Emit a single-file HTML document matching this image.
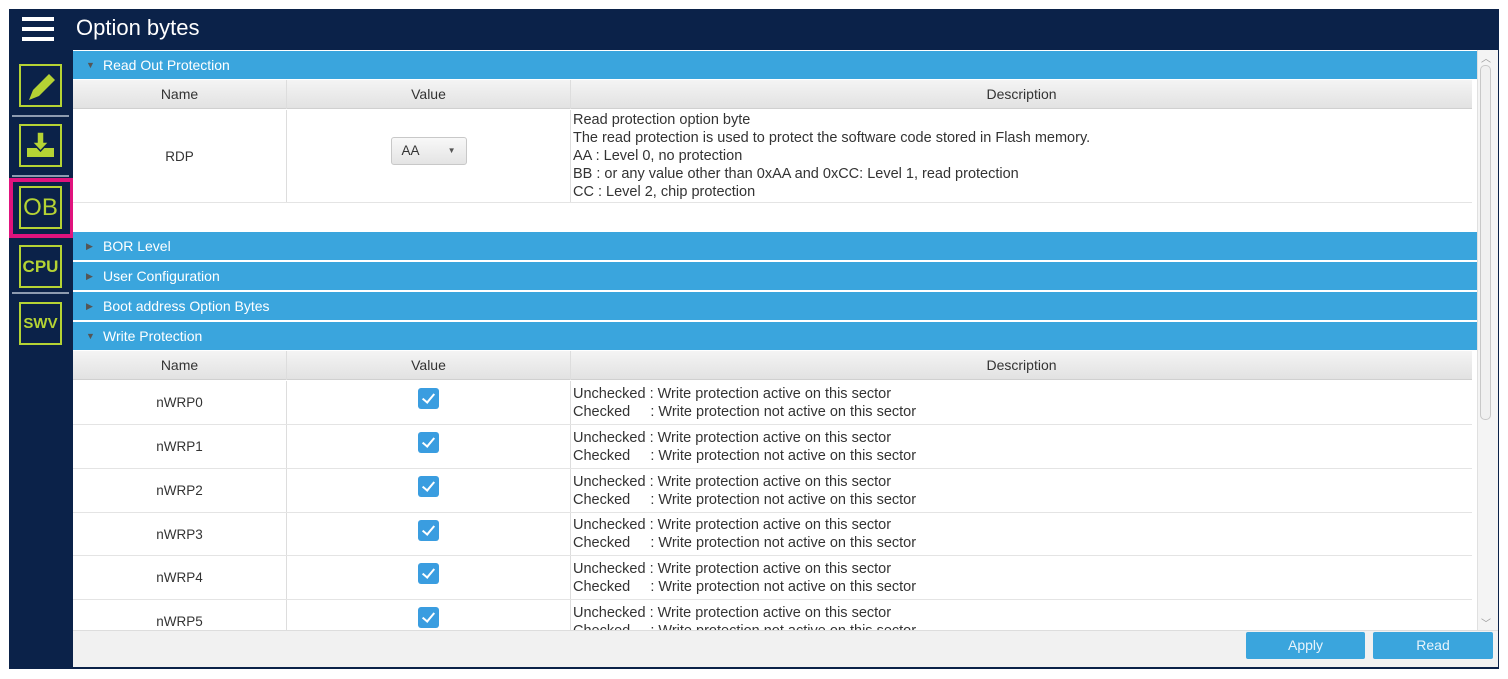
<!DOCTYPE html>
<html><head><meta charset="utf-8"><style>
*{margin:0;padding:0;box-sizing:border-box}
body{width:1508px;height:679px;background:#fff;position:relative;overflow:hidden;font-family:"Liberation Sans",sans-serif;font-size:13.5px;color:#333}
div{position:absolute}
.frame{left:9px;top:9px;width:1490px;height:660px;background:#0b2249}
.title{left:76px;top:15px;color:#fff;font-size:22px}
.content{left:73px;top:50px;width:1425px;height:617px;background:#fff;overflow:hidden}
.sec{left:0;width:1404px;height:28px;background:#3aa5dd;color:#fff;font-size:14px;line-height:28px;padding-left:30px}
.sec i{position:absolute;left:13px;top:0;font-style:normal;font-size:9px;color:#555}
.th{left:0;width:1399px;height:29px;background:linear-gradient(#f4f4f4,#e2e2e2);border-bottom:1px solid #d0d0d0;font-size:14px;line-height:29px;color:#333}
.th span,.row span{position:absolute;text-align:center}
.c1{left:0;width:213px}
.c2{left:213px;width:284px;border-left:1px solid #ddd}
.c3{left:497px;width:902px;border-left:1px solid #ddd}
.row{left:0;width:1399px;border-bottom:1px solid #e4e4e4;background:#fff}
.row .c1,.row .c2{top:0;bottom:0;display:flex;align-items:center;justify-content:center}
.row .c3{top:0;bottom:0;text-align:left;padding-left:2px;line-height:18px;display:flex;flex-direction:column;justify-content:center;font-size:14.5px}
.cb{position:relative;width:21px;height:21px;background:#3a9de0;border-radius:3px;top:-4px}
.cb:after{content:"";position:absolute;left:7px;top:3px;width:5px;height:10px;border:solid #fff;border-width:0 2px 2px 0;transform:rotate(40deg)}
.ico{left:19px;width:43px;height:43px;border:2px solid #b5d334;color:#b5d334;font-weight:bold;text-align:center}
.sep{left:12px;width:57px;height:2px;background:#8d9bb0}
.btn{top:582px;height:27px;background:#3aa5dd;color:#e8f4fb;text-align:center;line-height:27px;font-size:14px;border-radius:2px}
</style></head><body>
<div class="frame"></div>
<div style="left:22px;top:17px;width:32px;height:4px;background:#fff"></div>
<div style="left:22px;top:27px;width:32px;height:4px;background:#fff"></div>
<div style="left:22px;top:37px;width:32px;height:4px;background:#fff"></div>
<div class="title">Option bytes</div>

<div class="ico" style="top:64px"><svg width="39" height="39" viewBox="0 0 39 39" style="position:absolute;left:0;top:0"><path d="M8 34 L12 24 L28 8 L34 14 L18 30 Z" fill="#b5d334"/></svg></div>
<div class="sep" style="top:115px"></div>
<div class="ico" style="top:124px"><svg width="39" height="39" viewBox="0 0 39 39" style="position:absolute;left:0;top:0"><rect x="6" y="22" width="27" height="9" fill="#b5d334"/><path d="M16 6 H23 V16 H28 L19.5 25 L11 16 H16 Z" fill="#b5d334" stroke="#0b2249" stroke-width="1.5"/></svg></div>
<div class="sep" style="top:175px"></div>
<div style="left:9px;top:178px;width:65px;height:60px;border:4px solid #e0137d"></div>
<div class="ico" style="top:186px;font-weight:normal;font-size:24px;line-height:40px">OB</div>
<div class="ico" style="top:245px;font-size:17px;line-height:39px">CPU</div>
<div class="sep" style="top:292px"></div>
<div class="ico" style="top:302px;font-size:15px;line-height:39px">SWV</div>

<div class="content">
 <div class="sec" style="top:1px"><i>▼</i>Read Out Protection</div>
 <div class="th" style="top:30px"><span class="c1">Name</span><span class="c2">Value</span><span class="c3">Description</span></div>
 <div class="row" style="top:60px;height:93px"><span class="c1">RDP</span><span class="c2"><div style="position:relative;width:76px;height:28px;border:1px solid #c8c8c8;border-radius:3px;background:linear-gradient(#f8f8f8,#e4e4e4);text-align:left;padding-left:10px;line-height:26px;top:-5px">AA<b style="position:absolute;right:10px;font-size:8px;color:#555">▼</b></div></span><span class="c3"><div style="position:static">Read protection option byte<br>The read protection is used to protect the software code stored in Flash memory.<br>AA : Level 0, no protection<br>BB : or any value other than 0xAA and 0xCC: Level 1, read protection<br>CC : Level 2, chip protection</div></span></div>
 <div class="sec" style="top:182px"><i>▶</i>BOR Level</div>
 <div class="sec" style="top:212px"><i>▶</i>User Configuration</div>
 <div class="sec" style="top:242px"><i>▶</i>Boot address Option Bytes</div>
 <div class="sec" style="top:272px"><i>▼</i>Write Protection</div>
 <div class="th" style="top:301px"><span class="c1">Name</span><span class="c2">Value</span><span class="c3">Description</span></div>
 <div class="row" style="top:331px;height:44px"><span class="c1">nWRP0</span><span class="c2"><div class="cb"></div></span><span class="c3"><div style="position:static">Unchecked : Write protection active on this sector<br>Checked &nbsp;&nbsp;&nbsp;&nbsp;: Write protection not active on this sector</div></span></div>
 <div class="row" style="top:375px;height:44px"><span class="c1">nWRP1</span><span class="c2"><div class="cb"></div></span><span class="c3"><div style="position:static">Unchecked : Write protection active on this sector<br>Checked &nbsp;&nbsp;&nbsp;&nbsp;: Write protection not active on this sector</div></span></div>
 <div class="row" style="top:419px;height:44px"><span class="c1">nWRP2</span><span class="c2"><div class="cb"></div></span><span class="c3"><div style="position:static">Unchecked : Write protection active on this sector<br>Checked &nbsp;&nbsp;&nbsp;&nbsp;: Write protection not active on this sector</div></span></div>
 <div class="row" style="top:463px;height:43px"><span class="c1">nWRP3</span><span class="c2"><div class="cb"></div></span><span class="c3"><div style="position:static">Unchecked : Write protection active on this sector<br>Checked &nbsp;&nbsp;&nbsp;&nbsp;: Write protection not active on this sector</div></span></div>
 <div class="row" style="top:506px;height:44px"><span class="c1">nWRP4</span><span class="c2"><div class="cb"></div></span><span class="c3"><div style="position:static">Unchecked : Write protection active on this sector<br>Checked &nbsp;&nbsp;&nbsp;&nbsp;: Write protection not active on this sector</div></span></div>
 <div class="row" style="top:550px;height:44px"><span class="c1">nWRP5</span><span class="c2"><div class="cb"></div></span><span class="c3"><div style="position:static">Unchecked : Write protection active on this sector<br>Checked &nbsp;&nbsp;&nbsp;&nbsp;: Write protection not active on this sector</div></span></div>
 <div style="left:0;top:580px;width:1425px;height:37px;background:#f1f1f1;border-top:1px solid #ddd"></div>
 <div style="left:1404px;top:0;width:21px;height:580px;background:#f4f4f4;border-left:1px solid #e0e0e0"></div>
 <div style="left:1407px;top:15px;width:11px;height:355px;border:1px solid #c8c8c8;border-radius:5px;background:#f0f0f0"></div>
 <div style="left:1408px;top:0;color:#999;font-size:10px">︿</div>
 <div style="left:1408px;top:565px;color:#999;font-size:10px">﹀</div>
 <div class="btn" style="left:1173px;width:119px">Apply</div>
 <div class="btn" style="left:1300px;width:120px">Read</div>
</div>
</body></html>
